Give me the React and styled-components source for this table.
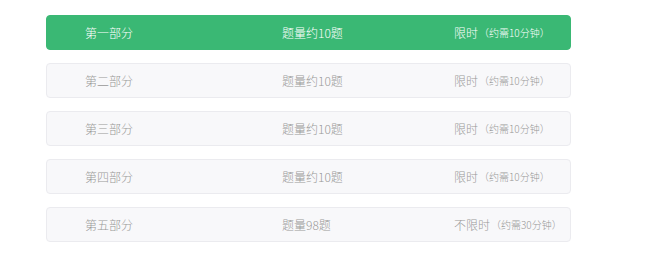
import React from 'react'
import styled, { createGlobalStyle } from 'styled-components'

const GlobalStyle = createGlobalStyle`
  body {
    margin: 0;
    background: #ffffff;
    font-family: "Noto Sans CJK SC", "Noto Sans", sans-serif;
  }
`

const parts = [
  { name: '第一部分', count: '题量约10题', limit: '限时', time: '约需10分钟', active: true },
  { name: '第二部分', count: '题量约10题', limit: '限时', time: '约需10分钟' },
  { name: '第三部分', count: '题量约10题', limit: '限时', time: '约需10分钟' },
  { name: '第四部分', count: '题量约10题', limit: '限时', time: '约需10分钟' },
  { name: '第五部分', count: '题量98题', limit: '不限时', time: '约需30分钟' },
]

function App() {
  return (
    <Page>
      <GlobalStyle />
      <List>
        {parts.map(p => (
          <Row key={p.name} active={p.active}>
            <Name>{p.name}</Name>
            <Count>{p.count}</Count>
            <Limit>
              {p.limit}
              <Time>（{p.time}）</Time>
            </Limit>
          </Row>
        ))}
      </List>
    </Page>
  )
}

export default App

const Page = styled.div`
  padding: 15px 0 0 46px;
  height: 254px;
`

const List = styled.div`
  width: 525px;
  display: flex;
  flex-direction: column;
  gap: 13px;
`

const Row = styled.div.withConfig({ shouldForwardProp: p => p !== 'active' })`
  box-sizing: border-box;
  height: 35px;
  display: grid;
  grid-template-columns: 197px 172px 1fr;
  align-items: center;
  padding: 0 12px 0 38px;
  border-radius: 4px;
  font-size: 12px;
  font-weight: 300;
  background: ${props => (props.active ? '#3ab874' : '#f8f8fa')};
  border: 1px solid ${props => (props.active ? '#3ab874' : '#ebebef')};
  color: ${props => (props.active ? '#ffffff' : '#989898')};
`

const Name = styled.span``

const Count = styled.span``

const Limit = styled.span`
  display: flex;
  align-items: center;
  white-space: nowrap;
`

const Time = styled.span`
  font-size: 10px;
  margin-left: 1px;
`
